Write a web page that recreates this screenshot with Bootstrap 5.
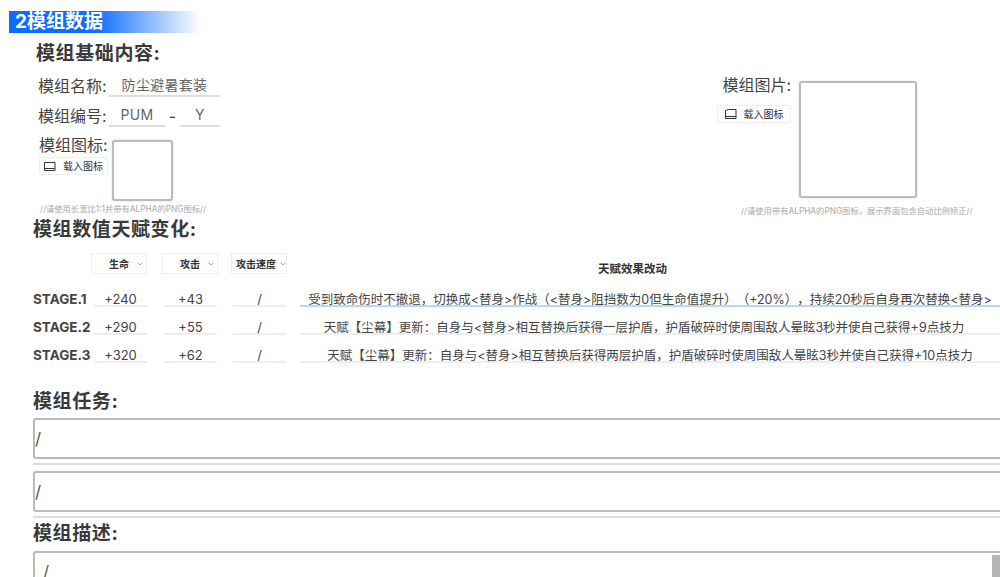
<!DOCTYPE html>
<html lang="zh"><head><meta charset="utf-8">
<link href="https://cdn.jsdelivr.net/npm/bootstrap@5.3.0/dist/css/bootstrap.min.css" rel="stylesheet">
<style>
html,body{height:577px;overflow:hidden;background:#fff}
body{font-family:"Inter","Noto Sans CJK SC",sans-serif;color:#333;width:1000px;text-spacing-trim:space-all}
.sheet{height:577px;overflow:hidden;padding:11px 0 0 9px}
.banner{width:191px;height:22px;line-height:22px;padding-left:6px;font-size:19px;font-weight:700;color:#fff;background:linear-gradient(90deg,#0d6efd 0,#0d6efd 45%,#fff 100%)}
.head{font-size:19px;font-weight:700;line-height:26px;color:#3a3a3a;letter-spacing:.6px}
.lbl{font-size:16px;line-height:22px;color:#444;white-space:nowrap}
.namecol{width:71px;flex:none}
.fld{border-bottom:2px solid #ddd;text-align:center;font-size:14px;line-height:20px;height:22px;color:#666;letter-spacing:.3px}
.topzone{margin-left:27px;height:175px}
.leftcol{width:640px}
.rw1{height:30px;padding-left:2px}
.iconbtn{display:flex;align-items:center;justify-content:center;gap:7px;height:18px;background:#fff;border:1px solid #eee;border-radius:2px;font-size:10px;color:#333;line-height:1;padding:0}
.picbox{background:#fff;border:2px solid #bbb;border-radius:3px;box-shadow:0 0 2px #ccc}
.hint{font-size:8.3px;color:#aaa;white-space:nowrap;line-height:10px}
.rowhead{margin-left:24px}
.sel{position:relative;height:21px;width:56px;border:1px solid #eee;font-size:10px;font-weight:700;line-height:20px;text-align:center;color:#333;white-space:nowrap}
.sel svg{position:absolute;right:3px;top:8px}
.stage{width:61px;font-size:13.5px;font-weight:700;color:#444;line-height:15px;white-space:nowrap;padding-top:1px}
.cell{border-bottom:2px solid #eee;height:11px;font-size:13px;line-height:11px;text-align:center;color:#444;width:53px;flex:none;margin-top:3px;box-sizing:content-box}
.txt{flex:1 1 auto;min-width:0;border-bottom:2px solid #eee;height:11px;font-size:12.5px;line-height:11px;text-align:center;white-space:nowrap;color:#444;margin-top:3px;margin-left:14px;box-sizing:content-box}
.txt.on{border-bottom-color:#bcd6f5}
.area{height:41px;border:2px solid #bbb;border-right:0;border-radius:3px 0 0 3px;font-size:17px;line-height:38px;color:#555;background:#fff;width:968px}
.rule{height:2px;background:#ddd;width:967px}
.track{position:absolute;right:0;top:4px;width:8px;height:40px;background:#b5b5b5}
</style></head><body>
<div class="sheet">
  <div class="banner">2模组数据</div>
  <div class="d-flex topzone mt-2">
    <div class="leftcol">
      <div class="head">模组基础内容:</div>
      <div class="d-flex rw1 mt-2"><div class="lbl namecol">模组名称:</div><div class="fld" style="width:111px">防尘避暑套装</div></div>
      <div class="d-flex rw1"><div class="lbl namecol">模组编号:</div><div class="fld" style="width:56px">PUM</div><div class="lbl text-center" style="width:15px">-</div><div class="fld" style="width:40px">Y</div></div>
      <div class="d-flex gap-1" style="padding-left:3px">
        <div style="width:69px">
          <div class="lbl" style="margin-top:-1px">模组图标:</div>
          <button class="iconbtn w-100" style="margin-top:1px" type="button"><svg width="12" height="10" viewBox="0 0 12 10" fill="none" stroke="#333"><path d="M.5 1.5h10.5v8h-10.5zM1 7.5h10"/></svg><span>载入图标</span></button>
        </div>
        <div class="picbox" style="width:61px;height:61px;margin-top:5px"></div>
      </div>
    </div>
    <div class="d-flex gap-2" style="margin:33px 0 0 41px">
      <div style="width:74px">
        <div class="lbl text-end">模组图片:</div>
        <button class="iconbtn w-100" style="margin-top:9px" type="button"><svg width="12" height="10" viewBox="0 0 12 10" fill="none" stroke="#333"><path d="M.5 1.5l3-1h7.5v9h-10.5zM1 7.5h10"/></svg><span>载入图标</span></button>
      </div>
      <div class="picbox" style="width:118px;height:117px;margin-top:7px"></div>
    </div>
  </div>
  <div class="d-flex" style="height:0">
    <div class="hint" style="margin:-12px 0 0 31px">//请使用长宽比1:1并带有ALPHA的PNG图标//</div>
    <div class="hint" style="margin:-10px 0 0 535px">//请使用带有ALPHA的PNG图标，展示界面包含自动比例矫正//</div>
  </div>
  <div class="head rowhead" style="margin-top:1px">模组数值天赋变化:</div>
  <div class="d-flex align-items-end rowhead" style="margin-top:9px;padding-left:58px;height:22px">
    <div class="sel">生命<svg width="6" height="4" viewBox="0 0 6 4" fill="none" stroke="#aaa"><path d="M.5.5l2.5 2.5 2.5-2.5"/></svg></div>
    <div class="sel" style="margin-left:15px">攻击<svg width="6" height="4" viewBox="0 0 6 4" fill="none" stroke="#aaa"><path d="M.5.5l2.5 2.5 2.5-2.5"/></svg></div>
    <div class="sel" style="margin-left:13px;padding-right:6px">攻击速度<svg style="right:0" width="6" height="4" viewBox="0 0 6 4" fill="none" stroke="#aaa"><path d="M.5.5l2.5 2.5 2.5-2.5"/></svg></div>
    <div class="flex-grow-1 text-center fw-bold" style="font-size:11.5px;line-height:14px;margin-bottom:-2px;color:#333;padding-right:22px">天赋效果改动</div>
  </div>
  <div class="rowhead" style="margin-top:17px">
    <div class="d-flex" style="height:28px"><div class="stage">STAGE.1</div><div class="cell">+240</div><div class="cell" style="margin-left:17px">+43</div><div class="cell" style="margin-left:16px">/</div><div class="txt on">受到致命伤时不撤退，切换成&lt;替身&gt;作战（&lt;替身&gt;阻挡数为0但生命值提升）（+20%），持续20秒后自身再次替换&lt;替身&gt;</div></div>
    <div class="d-flex" style="height:28px"><div class="stage">STAGE.2</div><div class="cell">+290</div><div class="cell" style="margin-left:17px">+55</div><div class="cell" style="margin-left:16px">/</div><div class="txt" style="padding-right:12px">天赋【尘幕】更新：自身与&lt;替身&gt;相互替换后获得一层护盾，护盾破碎时使周围敌人晕眩3秒并使自己获得+9点技力</div></div>
    <div class="d-flex" style="height:28px"><div class="stage">STAGE.3</div><div class="cell">+320</div><div class="cell" style="margin-left:17px">+62</div><div class="cell" style="margin-left:16px">/</div><div class="txt">天赋【尘幕】更新：自身与&lt;替身&gt;相互替换后获得两层护盾，护盾破碎时使周围敌人晕眩3秒并使自己获得+10点技力</div></div>
  </div>
  <div class="head rowhead" style="margin-top:14px">模组任务:</div>
  <div class="rowhead" style="margin-top:3px">
    <div class="area">/</div><div class="rule" style="margin-top:4px"></div>
    <div class="area" style="margin-top:6px">/</div><div class="rule" style="margin-top:4px"></div>
  </div>
  <div class="head rowhead" style="margin-top:3px">模组描述:</div>
  <div class="rowhead position-relative" style="margin-top:4px"><div class="area" style="height:60px;padding-left:8px">/</div><div class="track"></div></div>
</div>
<script src="https://cdn.jsdelivr.net/npm/bootstrap@5.3.0/dist/js/bootstrap.bundle.min.js"></script>
</body></html>
